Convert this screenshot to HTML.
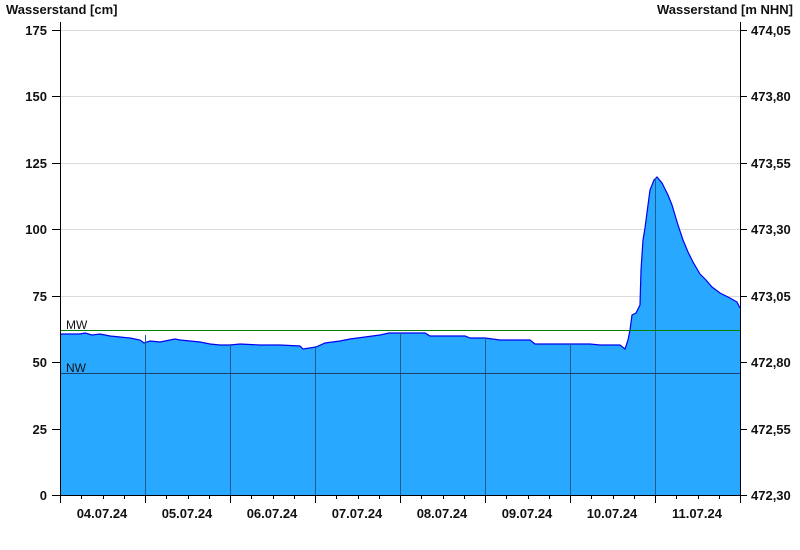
<!DOCTYPE html>
<html><head><meta charset="utf-8"><style>
html,body{margin:0;padding:0;background:#fff;}
svg{display:block;font-family:"Liberation Sans",Arial,sans-serif;}
</style></head><body>
<svg width="800" height="550" viewBox="0 0 800 550" xmlns="http://www.w3.org/2000/svg">
<rect width="800" height="550" fill="#fff"/>
<g stroke="#dcdcdc" stroke-width="1">
<line x1="60" y1="30.5" x2="740" y2="30.5"/>
<line x1="60" y1="96.5" x2="740" y2="96.5"/>
<line x1="60" y1="163.5" x2="740" y2="163.5"/>
<line x1="60" y1="229.5" x2="740" y2="229.5"/>
<line x1="60" y1="296.5" x2="740" y2="296.5"/>
<line x1="60" y1="362.5" x2="740" y2="362.5"/>
<line x1="60" y1="429.5" x2="740" y2="429.5"/>
</g>
<polygon fill="#29a8ff" stroke="none" points="60,495 60,335 62,334 80,334 85,333 92,335 100,334 110,336 120,337 130,338 140,340 144,343 150,341 160,342 175,339 180,340 200,342 210,344 220,345 230,345 240,344 260,345 280,345 300,346 303,349 316,347 325,343 340,341 350,339 365,337 380,335 389,333 425,333 430,336 445,336 465,336 470,338 485,338 500,340 530,340 535,344 560,344 565,344 590,344 600,345 620,345 625,349 628,340 630,330 632,315 636,313 640,305 641,270 643,240 645,228 648,205 650,190 654,180 657,177 662,183 668,195 672,205 678,225 683,240 688,252 693,262 700,274 706,280 712,287 720,293 730,298 737,302 740,308 740,495"/>
<polyline fill="none" stroke="#0000ee" stroke-width="1.2" points="60,335 62,334 80,334 85,333 92,335 100,334 110,336 120,337 130,338 140,340 144,343 150,341 160,342 175,339 180,340 200,342 210,344 220,345 230,345 240,344 260,345 280,345 300,346 303,349 316,347 325,343 340,341 350,339 365,337 380,335 389,333 425,333 430,336 445,336 465,336 470,338 485,338 500,340 530,340 535,344 560,344 565,344 590,344 600,345 620,345 625,349 628,340 630,330 632,315 636,313 640,305 641,270 643,240 645,228 648,205 650,190 654,180 657,177 662,183 668,195 672,205 678,225 683,240 688,252 693,262 700,274 706,280 712,287 720,293 730,298 737,302 740,308"/>
<g stroke="#1f5f8f" stroke-width="1">
<line x1="145.5" y1="335" x2="145.5" y2="495"/>
<line x1="230.5" y1="344" x2="230.5" y2="495"/>
<line x1="315.5" y1="346" x2="315.5" y2="495"/>
<line x1="400.5" y1="333" x2="400.5" y2="495"/>
<line x1="485.5" y1="338" x2="485.5" y2="495"/>
<line x1="570.5" y1="344" x2="570.5" y2="495"/>
<line x1="655.5" y1="178" x2="655.5" y2="495"/>
</g>
<line x1="60" y1="330.5" x2="740" y2="330.5" stroke="#008000"/>
<line x1="60" y1="373.5" x2="740" y2="373.5" stroke="#1a3f70"/>
<text x="66" y="329" font-size="12" fill="#111">MW</text>
<text x="66" y="372" font-size="12" fill="#111">NW</text>
<g stroke="#000" stroke-width="1">
<line x1="60.5" y1="22" x2="60.5" y2="495"/>
<line x1="740.5" y1="22" x2="740.5" y2="495"/>
<line x1="52" y1="495.5" x2="740" y2="495.5"/>
<line x1="52" y1="30.5" x2="60" y2="30.5"/><line x1="52" y1="96.5" x2="60" y2="96.5"/><line x1="52" y1="163.5" x2="60" y2="163.5"/><line x1="52" y1="229.5" x2="60" y2="229.5"/><line x1="52" y1="296.5" x2="60" y2="296.5"/><line x1="52" y1="362.5" x2="60" y2="362.5"/><line x1="52" y1="429.5" x2="60" y2="429.5"/>
<line x1="740" y1="30.5" x2="747" y2="30.5"/><line x1="740" y1="96.5" x2="747" y2="96.5"/><line x1="740" y1="163.5" x2="747" y2="163.5"/><line x1="740" y1="229.5" x2="747" y2="229.5"/><line x1="740" y1="296.5" x2="747" y2="296.5"/><line x1="740" y1="362.5" x2="747" y2="362.5"/><line x1="740" y1="429.5" x2="747" y2="429.5"/><line x1="740" y1="495.5" x2="747" y2="495.5"/>
<line x1="60.5" y1="495" x2="60.5" y2="503"/><line x1="145.5" y1="495" x2="145.5" y2="503"/><line x1="230.5" y1="495" x2="230.5" y2="503"/><line x1="315.5" y1="495" x2="315.5" y2="503"/><line x1="400.5" y1="495" x2="400.5" y2="503"/><line x1="485.5" y1="495" x2="485.5" y2="503"/><line x1="570.5" y1="495" x2="570.5" y2="503"/><line x1="655.5" y1="495" x2="655.5" y2="503"/><line x1="740.5" y1="495" x2="740.5" y2="503"/>
</g>
<g stroke="#000" stroke-width="1">
<line x1="81.5" y1="495" x2="81.5" y2="499"/><line x1="103.5" y1="495" x2="103.5" y2="499"/><line x1="124.5" y1="495" x2="124.5" y2="499"/>
<line x1="166.5" y1="495" x2="166.5" y2="499"/><line x1="188.5" y1="495" x2="188.5" y2="499"/><line x1="209.5" y1="495" x2="209.5" y2="499"/>
<line x1="251.5" y1="495" x2="251.5" y2="499"/><line x1="273.5" y1="495" x2="273.5" y2="499"/><line x1="294.5" y1="495" x2="294.5" y2="499"/>
<line x1="336.5" y1="495" x2="336.5" y2="499"/><line x1="358.5" y1="495" x2="358.5" y2="499"/><line x1="379.5" y1="495" x2="379.5" y2="499"/>
<line x1="421.5" y1="495" x2="421.5" y2="499"/><line x1="443.5" y1="495" x2="443.5" y2="499"/><line x1="464.5" y1="495" x2="464.5" y2="499"/>
<line x1="506.5" y1="495" x2="506.5" y2="499"/><line x1="528.5" y1="495" x2="528.5" y2="499"/><line x1="549.5" y1="495" x2="549.5" y2="499"/>
<line x1="591.5" y1="495" x2="591.5" y2="499"/><line x1="613.5" y1="495" x2="613.5" y2="499"/><line x1="634.5" y1="495" x2="634.5" y2="499"/>
<line x1="676.5" y1="495" x2="676.5" y2="499"/><line x1="698.5" y1="495" x2="698.5" y2="499"/><line x1="719.5" y1="495" x2="719.5" y2="499"/>
</g>
<g font-size="13" font-weight="bold" fill="#111">
<text x="6" y="14">Wasserstand [cm]</text>
<text x="793" y="14" text-anchor="end">Wasserstand [m NHN]</text>
<g text-anchor="end">
<text x="47" y="35">175</text><text x="47" y="101">150</text><text x="47" y="168">125</text><text x="47" y="234">100</text><text x="47" y="301">75</text><text x="47" y="367">50</text><text x="47" y="434">25</text><text x="47" y="500">0</text>
</g>
<g>
<text x="751" y="35">474,05</text><text x="751" y="101">473,80</text><text x="751" y="168">473,55</text><text x="751" y="234">473,30</text><text x="751" y="301">473,05</text><text x="751" y="367">472,80</text><text x="751" y="434">472,55</text><text x="751" y="500">472,30</text>
</g>
<g text-anchor="middle">
<text x="102" y="518">04.07.24</text><text x="187" y="518">05.07.24</text><text x="272" y="518">06.07.24</text><text x="357" y="518">07.07.24</text><text x="442" y="518">08.07.24</text><text x="527" y="518">09.07.24</text><text x="612" y="518">10.07.24</text><text x="697" y="518">11.07.24</text>
</g>
</g>
</svg>
</body></html>
